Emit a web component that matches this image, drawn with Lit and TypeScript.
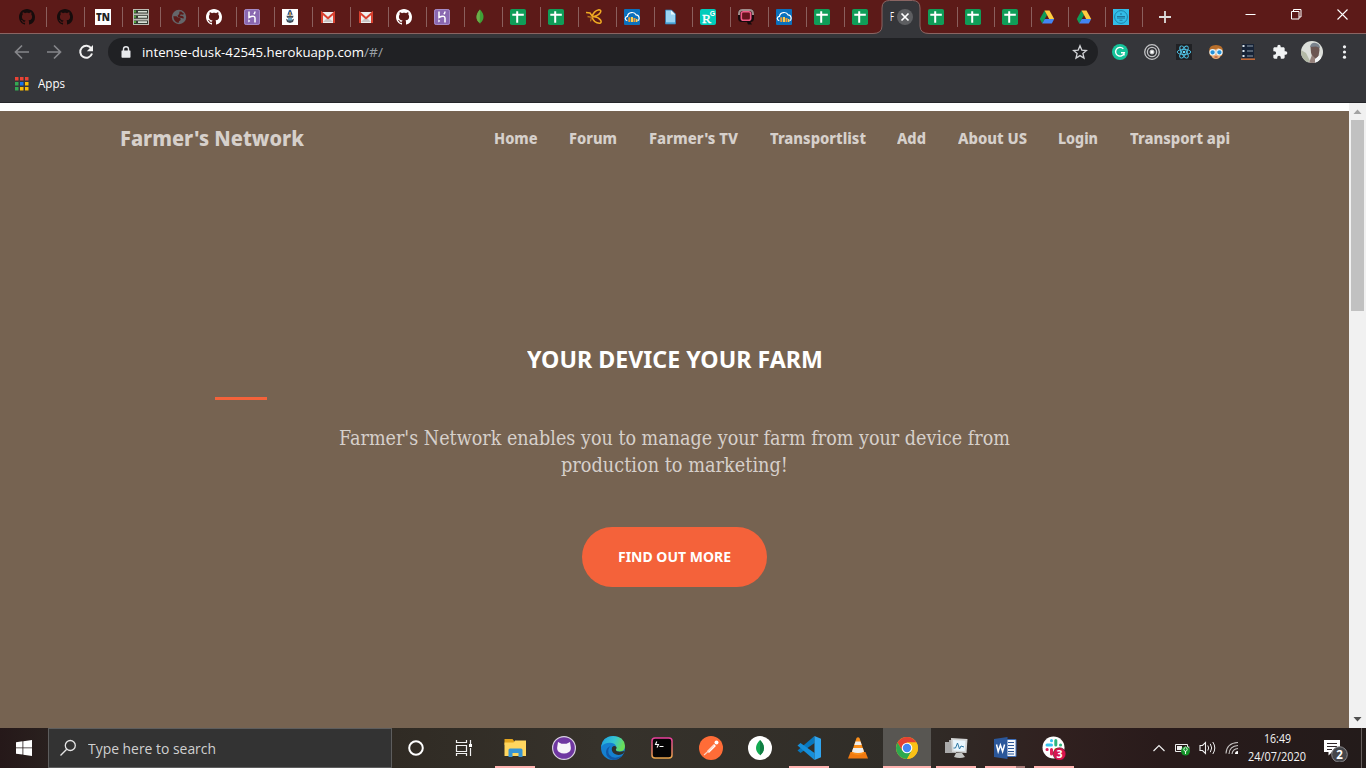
import { LitElement, html, svg, css } from "lit";
import { customElement, property } from "lit/decorators.js";

const githubShape = svg`<path fill-rule="evenodd" d="M8 0C3.58 0 0 3.58 0 8c0 3.54 2.29 6.53 5.47 7.59.4.07.55-.17.55-.38 0-.19-.01-.82-.01-1.49-2.01.37-2.53-.49-2.69-.94-.09-.23-.48-.94-.82-1.13-.28-.15-.68-.52-.01-.53.63-.01 1.08.58 1.23.82.72 1.21 1.87.87 2.33.66.07-.52.28-.87.51-1.07-1.78-.2-3.64-.89-3.64-3.95 0-.87.31-1.59.82-2.15-.08-.2-.36-1.02.08-2.12 0 0 .67-.21 2.2.82.64-.18 1.32-.27 2-.27s1.36.09 2 .27c1.53-1.04 2.2-.82 2.2-.82.44 1.1.16 1.92.08 2.12.51.56.82 1.27.82 2.15 0 3.07-1.87 3.75-3.65 3.95.29.25.54.73.54 1.48 0 1.07-.01 1.93-.01 2.2 0 .21.15.46.55.38A8.01 8.01 0 0 0 16 8c0-4.42-3.58-8-8-8z"/>`;

// 16-unit favicons
const fav: Record<string, unknown> = {
  githubDark: svg`<g fill="#160c0c">${githubShape}</g>`,
  github: svg`<g fill="#fff">${githubShape}</g>`,
  tn: svg`<rect width="16" height="16" fill="#fff"/><text x="8" y="12" text-anchor="middle" font-family="Open Sans, sans-serif" font-weight="800" font-size="10.5" textLength="14" lengthAdjust="spacingAndGlyphs" fill="#222">TN</text>`,
  server: svg`<path fill="#bcbcb4" d="M0 0h16v16H0z"/><path fill="#343b33" d="M1 1h14v3.600H1zM1 6.200h14v3.600H1zM1 11.400h14v3.600H1z"/><path fill="#d9e0d6" d="M5 1.900h9v1.600H5zM5 7.100h9v1.600H5zM5 12.300h9v1.600H5z"/><path fill="#53a83d" d="M1 1.500h2v2H1zM1 6.700h2v2H1zM1 11.900h2v2H1z"/>`,
  globe: svg`<circle cx="8" cy="8" r="7.200" fill="#65666a"/><path fill="#5c1a18" d="M2.300 7.200h3.200l2 1.800h1.800l.4 2-1.700 1.300-.5 1.700Q2.800 13 2.300 7.200zM8.500 2.600l1.700-.2 3 2.600-1.500.7-1.900-.4-.9 1.500 2.500.3 1.400 1-.4 1.600-1.500-.7-3.700-.6-.6-2 1.600-1.300z"/>`,
  heroku: svg`<rect width="16" height="16" rx="2.500" fill="#8a68b1"/><rect x=".5" y=".5" width="15" height="15" rx="2" fill="none" stroke="#a68bc5"/><path d="M5 2.500v6c3-1.500 6-1.700 6 .5v4.500M11 2.500c0 1.400-.5 2-1.200 2.700" fill="none" stroke="#fff" stroke-width="1.500"/><path fill="#fff" d="M4.300 10.300l2 1.600-2 1.700z"/>`,
  crest: svg`<rect width="16" height="16" fill="#fff"/><path fill="#2a5796" d="M7 1.500c.7-1 1.500-1 2 0l1.700 4.200H5.300z"/><path fill="#e5a035" d="M7.300 3h1.500v4H7.300z"/><path fill="#3f4b58" d="M4.500 6.700h7l-.5 2H5zM4 9.700c2.500 1.700 5.500 1.700 8 0l-1 3.300-3 1-3-1z"/><path fill="#69aac8" d="M6 9h4v2.500H6z"/>`,
  gmail: svg`<path fill="#eee" d="M1 3h14v11H1z"/><path fill="#c9c5c5" d="M3 13l5-5 5 5z"/><path fill="none" stroke="#d9402f" stroke-width="2" d="M2 14V4l6 5.200L14 4v10"/>`,
  mongo: svg`<path fill="#3fa037" d="M8 .5c2.500 2.500 3.700 5 3.500 7.500-.1 2.800-1.400 4.700-3.200 6L8 15.800 7.700 14C6 12.700 4.500 11 4.500 8S6 3 8 .5z"/><path fill="#6cad48" d="M8 .5C6 3 4.500 5 4.500 8s1.500 4.700 3.200 6z"/>`,
  sheet: svg`<rect width="16" height="16" rx="1.800" fill="#0f9d58"/><path d="M2.300 5.700h11.500M7.200 2.300v11.500" stroke="#fff" stroke-width="2"/>`,
  bee: svg`<g fill="none" stroke="#f0ac22" stroke-width="1.500"><path d="M0 3.500l4 .5 2.500 3.500M6 8Q7.500 2 13 .8q3 .4 1 3.200T6 8q5.500-1 8.500 3 1.500 2.500-.5 3.200-6 .3-8-6.200"/></g><path d="M1.500 7.500l4 .8-1 4" fill="none" stroke="#b97620" stroke-width="1.300"/>`,
  cloud: svg`<rect width="16" height="16" rx="1" fill="#0b70bd"/><path fill="#f29a2e" d="M4.300 8.300h2V13h-2zM9.500 9h2v4h-2z"/><path fill="#ffce4b" d="M7 8h2v5H7zM12 10h1.400v3H12z"/><path d="M3.300 11.800C.2 10.800 1 7.400 3.500 7.300c.5-4.500 7-5 8.500-1.500 3.500 0 4 5 1.600 6" fill="none" stroke="#fff" stroke-width="1.200"/>`,
  file: svg`<path fill="#9bd4f3" d="M3.500 1h6l4 4v10h-10z"/><path fill="#e5f7ff" d="M9 1v4.500h4.500z"/><path fill="#5db3e2" d="M3.500 13h10v2h-10z"/><path fill="none" stroke="#3079ad" stroke-width=".8" d="M3.500 1h6l4 4v10h-10z"/>`,
  rg: svg`<rect width="16" height="16" rx="2" fill="#00ccbb"/><text x="2" y="13.500" font-family="Liberation Serif, serif" font-size="13.500" fill="#fff" stroke="#fff" stroke-width=".4">R</text><text x="9.800" y="7.200" font-family="Liberation Sans, sans-serif" font-weight="700" font-size="7" fill="#fff">G</text>`,
  q: svg`<path d="M4 0h8q4 0 4 4v5q0 4-3.500 4L14 15.500H10L9 13H4q-4 0-4-4V4q0-4 4-4z" fill="#150a0c"/><path d="M1 6V5Q1 1 4.500 1h7q3.500 0 3.500 4v1" fill="none" stroke="#a08d8b" stroke-width="2"/><rect x="3.300" y="2.800" width="9.400" height="8.400" rx="2" fill="#67131d" stroke="#ef5b87" stroke-width="1.600"/>`,
  drive: svg`<path fill="#0f9d58" d="M5.500 1.500L.800 10l2.400 4.500L8 6z"/><path fill="#ffcd40" d="M5.500 1.500h5L15.200 10h-5z"/><path fill="#4285f4" d="M5.800 10h9.400l-2.400 4.500H3.200z"/>`,
  round: svg`<rect width="16" height="16" fill="#32bce7"/><circle cx="8" cy="8" r="6.400" fill="none" stroke="#197da4" stroke-width=".9"/><path d="M7 5h2M4 7.500h8M4 9h8M6.500 11.200h3" stroke="#1c6c8e" stroke-width=".9"/>`,
};

const leadingTabs = ["githubDark", "githubDark", "tn", "server", "globe"];
const middleTabs = ["github", "heroku", "crest", "gmail", "gmail", "github", "heroku", "mongo", "sheet", "sheet", "bee", "cloud", "file", "rg", "q", "cloud", "sheet", "sheet"];
const trailingTabs = ["sheet", "sheet", "sheet", "drive", "drive", "round"];

// Text stretched horizontally so that it fills a known advance width.
@customElement("fit-text")
export class FitText extends LitElement {
  @property({ type: Number }) width = 0;
  static styles = css`
    :host { display: inline-block; white-space: nowrap; text-align: left; }
    .glyphs { display: inline-block; transform-origin: 0 50%; }
  `;
  render() {
    return html`<span class="glyphs"><slot></slot></span>`;
  }
  firstUpdated() {
    const span = this.renderRoot.querySelector(".glyphs") as HTMLElement;
    const natural = span.getBoundingClientRect().width;
    this.style.width = `${this.width}px`;
    if (natural) span.style.transform = `scaleX(${this.width / natural})`;
  }
}

@customElement("browser-chrome")
export class BrowserChrome extends LitElement {
  static styles = css`
    :host { display: block; font-family: "Open Sans", "Noto Sans", sans-serif; color: #fff; }
    svg { display: block; flex: none; }
    .tabs { height: 34px; display: flex; background: #5c1a18; padding-left: 9px; box-sizing: border-box; box-shadow: inset 0 -1px #8a6563; }
    .tab { width: 38px; box-sizing: border-box; display: flex; padding: 9px 0 0 7px; background: linear-gradient(#8b5f5d, #8b5f5d) right 7px / 1px 20px no-repeat; }
    .tab.lead { padding-left: 10px; }
    .tab.plain { background: none; }
    .tab.tail { width: 37px; }
    .active { width: 38px; position: relative; }
    .active .shape { position: absolute; left: -10px; top: 0; }
    .active .label { position: absolute; left: 7px; top: 10px; font-size: 12px; line-height: 14px; }
    .active .close { position: absolute; left: 14px; top: 9px; }
    .plus { margin: 11px 0 0 16px; }
    .window { margin-left: auto; display: flex; gap: 35px; padding: 9px 18px 0 0; }
    .toolbar { height: 36px; background: #35363a; display: flex; align-items: center; padding-left: 14px; }
    .nav { display: flex; gap: 16px; width: 94px; }
    .omni { width: 990px; height: 28px; box-sizing: border-box; border-radius: 14px; background: #202124; display: flex; align-items: center; padding: 0 10px 0 12px; font-size: 13.500px; line-height: 18px; }
    .lock { margin-right: 10px; }
    .path { color: #9aa0a6; }
    .star { margin-left: auto; }
    .ext { display: flex; align-items: center; gap: 16px; margin-left: 14px; }
    .avatar { margin: 0 -3px; }
    .bookmarks { height: 33px; box-sizing: border-box; background: #35363a; border-bottom: 1px solid #25262a; display: flex; align-items: flex-start; padding: 7px 0 0 15px; font-size: 12.500px; line-height: 14px; gap: 9px; }
  `;
  private tab(name: string, extra = "") {
    return html`<div class="tab ${extra}"><svg width="16" height="16" viewBox="0 0 16 16">${fav[name]}</svg></div>`;
  }
  render() {
    const dots = ["#ea4335", "#ea4335", "#ea4335", "#34a853", "#1a73e8", "#fbbc05", "#34a853", "#fbbc05", "#fbbc05"];
    return html`
      <div class="tabs">
        ${leadingTabs.map((t) => this.tab(t, "lead"))}
        ${middleTabs.map((t, i) => this.tab(t, i === middleTabs.length - 1 ? "plain" : ""))}
        <div class="active">
          <svg class="shape" width="56" height="34" viewBox="0 0 56 34"><path d="M0 34v-.5q9 0 9-7.500V8q0-7.500 7.500-7.500h23q7.500 0 7.500 7.500v18q0 7.500 9 7.500v.5z" fill="#35363a"/><path d="M0 33.500q9 0 9-7.500V8q0-7.500 7.500-7.500h23q7.500 0 7.500 7.500v18q0 7.500 9 7.500" fill="none" stroke="#8a6563"/></svg>
          <fit-text class="label" width="4">F</fit-text>
          <svg class="close" width="16" height="16" viewBox="0 0 16 16"><circle cx="8" cy="8" r="8" fill="#5d5e61"/><path d="M4.500 4.500l7 7M11.500 4.500l-7 7" stroke="#fff" stroke-width="1.700"/></svg>
        </div>
        ${trailingTabs.map((t) => this.tab(t, "tail"))}
        <svg class="plus" width="12" height="12" viewBox="0 0 12 12"><path d="M6 0v12M0 6h12" stroke="#ddd" stroke-width="1.800"/></svg>
        <div class="window">
          <svg width="11" height="11" viewBox="0 0 11 11"><path d="M.5 5.500h10" stroke="#fff"/></svg>
          <svg width="11" height="11" viewBox="0 0 11 11"><path d="M.5 2.500h7.500v7.500h-7.500zM2.500 2.500v-2h7.500v7.500H8" fill="none" stroke="#fff"/></svg>
          <svg width="11" height="11" viewBox="0 0 11 11"><path d="M.5.500l10 10M10.500.500l-10 10" stroke="#fff" stroke-width="1.100"/></svg>
        </div>
      </div>
      <div class="toolbar">
        <div class="nav">
          <svg width="16" height="16" viewBox="0 0 16 16"><path d="M15 8H2M8 1.500L1.500 8 8 14.500" fill="none" stroke="#85868a" stroke-width="1.700"/></svg>
          <svg width="16" height="16" viewBox="0 0 16 16"><path d="M1 8h13M8 1.500L14.500 8 8 14.500" fill="none" stroke="#85868a" stroke-width="1.700"/></svg>
          <svg width="16" height="16" viewBox="0 0 16 16"><path d="M13.300 4.500A6 6 0 1 0 14 9.500" fill="none" stroke="#f1f1f1" stroke-width="2"/><path d="M15 1v6.200H8.800z" fill="#f1f1f1"/></svg>
        </div>
        <div class="omni">
          <svg class="lock" width="12" height="14" viewBox="0 0 12 14"><path d="M2 5.500h8q.5 0 .5.500v6q0 .7-.7.700H2.200q-.7 0-.7-.7V6q0-.5.5-.5z" fill="#e8eaed"/><path d="M3.500 6V4q0-2.300 2.500-2.300T8.500 4v2" fill="none" stroke="#e8eaed" stroke-width="1.400"/></svg>
          <fit-text width="222">intense-dusk-42545.herokuapp.com</fit-text><fit-text class="path" width="19">/#/</fit-text>
          <svg class="star" width="16" height="16" viewBox="0 0 16 16"><path d="M8 1.800l1.800 4.300 4.700.4-3.600 3 1.100 4.600L8 11.600l-4 2.500 1.100-4.600-3.600-3 4.700-.4z" fill="none" stroke="#d2d4d7" stroke-width="1.300"/></svg>
        </div>
        <div class="ext">
          <svg width="16" height="16" viewBox="0 0 16 16"><circle cx="8" cy="8" r="8" fill="#15c39a"/><path d="M11.300 4.800A4.400 4.400 0 1 0 12.300 8.800H9M12 8.500v3" fill="none" stroke="#fff" stroke-width="1.400"/></svg>
          <svg width="16" height="16" viewBox="0 0 16 16" fill="none" stroke="#c3c4c6"><circle cx="8" cy="8" r="7.300" stroke-width="1.300"/><circle cx="8" cy="8" r="4.600" stroke-width="1.300"/><circle cx="8" cy="8" r="2" fill="#fff"/></svg>
          <svg width="16" height="16" viewBox="0 0 16 16"><rect width="16" height="16" fill="#202124"/><g fill="none" stroke="#4fc4e8" stroke-width=".9"><ellipse cx="8" cy="8" rx="6.800" ry="2.600"/><ellipse cx="8" cy="8" rx="6.800" ry="2.600" transform="rotate(60 8 8)"/><ellipse cx="8" cy="8" rx="6.800" ry="2.600" transform="rotate(120 8 8)"/></g><circle cx="8" cy="8" r="1.300" fill="#61dafb"/></svg>
          <svg width="16" height="16" viewBox="0 0 16 16"><path fill="#b86e2a" d="M1 7q0-6 7-6t7 6l-1 5-12 0z"/><path fill="#edae78" d="M3 7l8-3 2 3v4q-1 4-5 4t-5-4z"/><g fill="#2491d9" stroke="#e6f5fc" stroke-width="1.100"><circle cx="4.600" cy="8.300" r="2.700"/><circle cx="11.400" cy="8.300" r="2.700"/></g><path d="M6.500 13h3" stroke="#963d2d"/></svg>
          <svg width="16" height="16" viewBox="0 0 16 16"><path fill="#182437" d="M2 0h12v14H2z"/><path d="M7 2h6M7 7h6M7 12h6" stroke="#8c9cab" stroke-width="1.200"/><path fill="#dbe5ed" d="M2.500 1h2v2h-2zM2.500 6h2v2h-2zM2.500 11h2v2h-2z"/><path d="M1 15.200h14" stroke="#c96b35" stroke-width="1.500"/></svg>
          <svg width="16" height="16" viewBox="0 0 24 24"><path fill="#f1f3f4" d="M20.500 11H19V7c0-1.100-.9-2-2-2h-4V3.500a2.500 2.500 0 0 0-5 0V5H4c-1.100 0-2 .9-2 2v3.800h1.500a2.700 2.700 0 0 1 0 5.400H2V20c0 1.100.9 2 2 2h3.800v-1.500a2.700 2.700 0 0 1 5.400 0V22H17c1.100 0 2-.9 2-2v-4h1.500a2.500 2.500 0 0 0 0-5z"/></svg>
          <svg class="avatar" width="22" height="22" viewBox="0 0 22 22"><defs><clipPath id="face"><circle cx="11" cy="11" r="11"/></clipPath></defs><g clip-path="url(#face)"><rect width="22" height="22" fill="#dcdfda"/><path d="M0 9l5 3 4 8-4 2-5-4z" fill="#b3b9a6"/><path d="M9.500 6q1-3 5-3t4 6l-1 6-2.500 3-3.500-2q-2-4-2-10z" fill="#6b5652"/><path d="M9 6q1-5 6-4 4 1 4 5l-4-1.500z" fill="#7a828c"/><path d="M8 22l3-8 3 3 0 5z" fill="#94807a"/><path d="M14 18l5-4 3 8h-8z" fill="#f2f4f5"/></g></svg>
          <svg width="16" height="16" viewBox="0 0 16 16" fill="#f1f3f4"><circle cx="8.500" cy="2.800" r="1.600"/><circle cx="8.500" cy="8" r="1.600"/><circle cx="8.500" cy="13.200" r="1.600"/></svg>
        </div>
      </div>
      <div class="bookmarks">
        <svg width="14" height="14" viewBox="0 0 14 14">${dots.map((c, i) => svg`<rect x=${(i % 3) * 5} y=${Math.floor(i / 3) * 5} width="3.500" height="3.500" fill=${c}/>`)}</svg>
        <fit-text width="27">Apps</fit-text>
      </div>
    `;
  }
}

@customElement("farm-page")
export class FarmPage extends LitElement {
  static styles = css`
    :host { display: flex; height: 625px; background: #fff; }
    .site { width: 1349px; height: 617px; margin-top: 8px; background: #766351; display: flex; flex-direction: column; }
    .bar { display: flex; justify-content: space-between; margin: 0 119px 0 120px; height: 54px; line-height: 54px; font-family: "Noto Sans", sans-serif; font-weight: 800; color: #d6d0cb; }
    .brand { font-size: 20.500px; }
    .links { display: flex; gap: 31.600px; font-size: 15px; }
    .hero { display: flex; flex-direction: column; align-items: center; padding-top: 176px; }
    h1 { margin: 0; font: 700 24px/36px "Noto Sans", sans-serif; color: #fff; height: 36px; }
    .rule { width: 52px; height: 3px; background: #f4623a; align-self: flex-start; margin: 20px 0 25px 215px; }
    p { margin: 0; font: 19.500px/27px "DejaVu Serif", serif; color: #d6d0cb; text-align: center; display: flex; flex-direction: column; align-items: center; }
    .cta { margin-top: 48px; width: 185px; height: 60px; box-sizing: border-box; border-radius: 30px; background: #f4623a; color: #fff; border: 0; padding: 0 0 3px 0; display: flex; align-items: center; justify-content: center; font: 700 14.500px/20px "Noto Sans", sans-serif; }
    .scroll { width: 17px; background: #f1f1f1; display: flex; flex-direction: column; align-items: center; }
    .thumb { width: 13px; height: 191px; background: #c1c1c1; }
    .down { margin-top: auto; }
    svg { display: block; }
  `;
  render() {
    const links: [string, number][] = [["Home", 43.5], ["Forum", 48], ["Farmer's TV", 89], ["Transportlist", 96], ["Add", 29], ["About US", 69], ["Login", 40], ["Transport api", 100]];
    return html`
      <main class="site">
        <nav class="bar">
          <fit-text class="brand" width="184">Farmer's Network</fit-text>
          <div class="links">${links.map(([t, w]) => html`<fit-text width=${w}>${t}</fit-text>`)}</div>
        </nav>
        <section class="hero">
          <h1><fit-text width="296">YOUR DEVICE YOUR FARM</fit-text></h1>
          <div class="rule"></div>
          <p>
            <fit-text width="671">Farmer's Network enables you to manage your farm from your device from</fit-text>
            <fit-text width="227">production to marketing!</fit-text>
          </p>
          <button class="cta"><fit-text width="113">FIND OUT MORE</fit-text></button>
        </section>
      </main>
      <div class="scroll">
        <svg width="17" height="17" viewBox="0 0 17 17"><path d="M4.500 11h8l-4-4.500z" fill="#a3a3a3"/></svg>
        <div class="thumb"></div>
        <svg class="down" width="17" height="17" viewBox="0 0 17 17"><path d="M4.500 6h8l-4 4.500z" fill="#505050"/></svg>
      </div>
    `;
  }
}

// 24-unit taskbar application icons
const apps: { icon: unknown; state?: string }[] = [
  { icon: svg`<circle cx="12" cy="12" r="6.800" fill="none" stroke="#fff" stroke-width="2"/>` },
  { icon: svg`<path d="M3.500 4v2.500h10V4M3.500 9.500h10v6H3.500zM3.500 20v-2.500h10V20M17.500 4v4M17.500 12v8" fill="none" stroke="#f1f1f1" stroke-width="1.200"/><path fill="#fff" d="M16 8h3v3h-3z"/>` },
  { icon: svg`<path fill="#e3a41d" d="M1.500 3h8l1.500 2v4h-9.500z"/><path fill="#ffd65f" d="M1.500 6.500h9l1.500-2h11V20h-21.500z"/><path fill="#3794d4" d="M5.500 14q0-1.500 1.500-1.500h11q1.500 0 1.500 1.500v7h-4v-4h-6v4h-4z"/>`, state: "open first" },
  { icon: svg`<circle cx="12" cy="12" r="11.400" fill="#6f37a1" stroke="#d8d1e0" stroke-width="1.200"/><path fill="#f7f4f8" d="M6 6l3.500 1.700h5L18 6l.6 4q1 4-1.600 6-5 3-10 0-2.600-2-1.600-6z"/>` },
  { icon: svg`<defs><linearGradient id="wave" x1="0" y1="0" x2="1" y2=".3"><stop stop-color="#1b9de2"/><stop offset=".6" stop-color="#37c6d0"/><stop offset="1" stop-color="#6ade58"/></linearGradient></defs><circle cx="12" cy="12" r="12" fill="#1580d0"/><path fill="url(#wave)" d="M0 11Q2 0 12 0q11 0 12 10 0 5-5 5.500-5 0-4-2.500 1-5-4-6Q4 6 0 11z"/><path fill="#1257a5" d="M9.500 10q-4 4-1 9 4 5 13 .5Q17 24 12 24 5 22 5 16q0-4 4.500-6z"/><path fill="#2f302b" d="M11 11.500q2-2.500 4.500-.5.500 1-.7 2.500.5 3.500 8.700 1.500-.8 2.500-2 3-5 2-8.500-.5-3-2.500-2-6z"/>` },
  { icon: svg`<defs><linearGradient id="rim" x1="0" y1="0" x2="0" y2="1"><stop stop-color="#e83e9c"/><stop offset="1" stop-color="#e9a64a"/></linearGradient></defs><rect x="2" y="2" width="20" height="20" rx="3" fill="#050505" stroke="url(#rim)" stroke-width="1.500"/><path d="M6.800 5.500L5.500 8.500h3l-1.500 3M9.500 10.500h4" fill="none" stroke="#fff" stroke-width="1.100"/>` },
  { icon: svg`<circle cx="12" cy="12" r="12" fill="#ff6c37"/><path d="M9 16l7-7" fill="none" stroke="#fff" stroke-width="2.600"/><path d="M5 19l5-4.500 5-5" fill="none" stroke="#ffd2c1" stroke-width="1.200"/><circle cx="17.500" cy="6.500" r="2" fill="#fff"/>` },
  { icon: svg`<circle cx="12" cy="12" r="12" fill="#fff"/><path fill="#13aa52" d="M12 4q4 4 4 8t-4 7q-4-3-4-7t4-8z"/><path fill="#107d43" d="M12 4q4 4 4 8t-4 7.500z"/>` },
  { icon: svg`<path fill="#0877bd" d="M17.500 0v7L3.500 17 .5 14.500z"/><path fill="#168fda" d="M.5 9.500l3-2.500 14 10v7z"/><path fill="#30a5ef" d="M17.500 0L24 2.800v18.400L17.500 24z"/>`, state: "open" },
  { icon: svg`<path fill="#f17a10" d="M4.500 16h15l2.500 6.500H2z"/><path fill="#fb8f1b" d="M10.500 2q1.500-1.500 3 0l5 15q-6.500 4-13 0z"/><path fill="#eee" d="M9.500 5.500h5l1.200 3.500H8.300zM7.200 12h9.600l1.200 3.700q-6 2.500-12 0z"/>` },
  { icon: svg`<circle cx="12" cy="12" r="11" fill="#fbc116"/><path fill="#e34133" d="M2.500 6.500a11 11 0 0 1 19 0H12l-4.800 8.200z"/><path fill="#2da94f" d="M2.500 6.500l4.800 8.200 9.500 0L12 23A11 11 0 0 1 2.500 6.500z"/><path fill="#fbc116" d="M12 6.500h9.500A11 11 0 0 1 12 23l4.800-8.500z"/><circle cx="12" cy="12" r="5.300" fill="#fff"/><circle cx="12" cy="12" r="4.200" fill="#4386f4"/>`, state: "current" },
  { icon: svg`<path fill="#aaa" d="M1 6h7v11H1zM5 4h7v13H5z"/><path fill="#d3d5d5" d="M7 2l16.500 1-1 14-14.500-1z"/><path fill="#eaf6fd" d="M9 4l12.500.8-.8 10.200-11.200-.6z"/><path d="M9.500 12h2l2-5 2 6 1.500-3 3 1" fill="none" stroke="#2e78a4"/><path fill="#c4c5c3" d="M12 17h6l3 4q-5 2-11 0z"/>`, state: "open" },
  { icon: svg`<path fill="#f4f7fb" stroke="#3e6db5" d="M12 3.500h11v17H12z"/><path d="M15 6.500h6M15 9.500h6M15 12.500h6M15 15.500h6M15 18h6" stroke="#2b579a"/><path fill="#2b579a" d="M1 3l13.500-2v22L1 21z"/><path d="M3.500 8.500l1.700 7 2.200-6.500 2.200 6.500 2-7" fill="none" stroke="#fff" stroke-width="1.500"/>`, state: "grouped" },
  { icon: svg`<circle cx="11.500" cy="11.500" r="11" fill="#fff"/><g stroke-width="3" stroke-linecap="round"><path d="M9.500 4.500v.2M5 9h4.500" stroke="#36c5f0"/><path d="M13.800 4.500v4.500M18.500 9h.1" stroke="#2eb67d"/><path d="M9.500 13.500v4.500M5 13.500h.2" stroke="#e01e5a"/><path d="M13.800 13.500h4" stroke="#ecb22e"/></g><circle cx="17.500" cy="18" r="6.300" fill="#d8134f" stroke="#4c1524" stroke-width=".6"/><text x="17.500" y="21.800" text-anchor="middle" font-family="Open Sans, sans-serif" font-weight="700" font-size="10.500" fill="#fff">3</text>`, state: "open" },
];

@customElement("task-bar")
export class TaskBar extends LitElement {
  static styles = css`
    :host { display: flex; height: 40px; background: linear-gradient(90deg, #251819 0, #29201e 48px, #302b24 392px, #36322b 600px, #302d28 900px, #30201f 1060px, #291b1b 1160px, #231b1a 100%); color: #f4f4f4; font-family: "Open Sans", sans-serif; }
    svg { display: block; flex: none; }
    .start { width: 48px; display: flex; align-items: center; justify-content: center; }
    .search { width: 344px; height: 40px; box-sizing: border-box; border: 1px solid #5d5d5d; background: #333; display: flex; align-items: center; padding-left: 10px; gap: 11px; font-size: 15px; color: #d0d0d0; }
    .apps { display: flex; gap: 1px; }
    .app { width: 48px; height: 40px; box-sizing: border-box; display: flex; align-items: center; justify-content: center; background: linear-gradient(#ffb3b0, #ffb3b0) 4px 100% / 0 2px no-repeat; }
    .first { margin-left: 1px; }
    .open { background-size: 40px 2px; }
    .grouped { background: linear-gradient(90deg, #ffb3b0 31px, #a87a78 31px) 4px 100% / 40px 2px no-repeat; }
    .current { background: linear-gradient(#ffb3b0, #ffb3b0) 0 100% / 100% 2px no-repeat #585652; }
    .tray { margin-left: auto; display: flex; align-items: center; gap: 8px; }
    .clock { display: flex; flex-direction: column; align-items: center; font-size: 12.500px; line-height: 18px; height: 40px; padding-top: 2px; box-sizing: border-box; margin-right: 9px; }
    .edge { width: 5px; height: 40px; box-sizing: border-box; border-left: 1px solid #665e5d; margin-left: 4px; }
  `;
  render() {
    return html`
      <div class="start"><svg width="16" height="16" viewBox="0 0 16 16"><path fill="#fff" d="M0 2.200L6.500 1.300v6.200H0zM7.300 1.200L16 0v7.500H7.300zM0 8.300h6.500v6.200L0 13.700zM7.300 8.300H16V16l-8.700-1.200z"/></svg></div>
      <div class="search">
        <svg width="18" height="18" viewBox="0 0 18 18"><circle cx="11.300" cy="6.500" r="5" fill="none" stroke="#e5e5e5" stroke-width="1.300"/><path d="M7.700 10.200L1.500 16.500" stroke="#e5e5e5" stroke-width="1.300"/></svg>
        <fit-text width="128">Type here to search</fit-text>
      </div>
      <div class="apps">${apps.map((a) => html`<div class="app ${a.state ?? ""}"><svg width="24" height="24" viewBox="0 0 24 24">${a.icon}</svg></div>`)}</div>
      <div class="tray">
        <svg width="14" height="16" viewBox="0 0 14 16"><path d="M1.500 11L7 5.500l5.500 5.500" fill="none" stroke="#eee" stroke-width="1.200"/></svg>
        <svg width="17" height="16" viewBox="0 0 17 16"><path d="M1.500 4.500h12v7h-12z" fill="none" stroke="#eee"/><path fill="#eee" d="M3 6h5v4H3zM14 6.500h1.300v3H14z"/><circle cx="11.500" cy="11" r="4.500" fill="#149329"/><path d="M11.500 14v-3M9.800 9.500q0-1.500 1.700-2.500 1.700 1 1.700 2.500 0 1.500-1.700 1.800-1.700-.3-1.700-1.800z" fill="none" stroke="#fff" stroke-width=".9"/></svg>
        <svg width="18" height="16" viewBox="0 0 18 16"><path d="M1 5.500H3.500L6.500 2.500v11L3.500 10.500H1z" fill="none" stroke="#eee" stroke-width="1.100"/><path d="M8.800 5.500q1.700 2.500 0 5M11.300 3.800q2.800 4.200 0 8.400M13.800 2q4 6 0 12" fill="none" stroke="#eee"/></svg>
        <svg width="15" height="16" viewBox="0 0 15 16"><g fill="none" stroke="#c8c4c3" stroke-width="1.100"><path d="M1 13.500Q1.500 3 13 2.500M4 14Q4.500 6 13 5.500M7 14Q7.500 9 13 8.500"/></g><path fill="#fff" d="M10 14q0-3 3-3v3z"/></svg>
        <div class="clock"><fit-text width="27">16:49</fit-text><fit-text width="58">24/07/2020</fit-text></div>
        <svg width="26" height="28" viewBox="0 0 26 28"><path fill="#fff" d="M1 6h16v12H9l-3.500 3.500V18H1z"/><path d="M4 9.500h10M4 12.500h10M4 15.500h5" stroke="#31272a"/><circle cx="16.500" cy="20.500" r="7.800" fill="#45464a" stroke="#8b898c"/><text x="16.500" y="24.800" text-anchor="middle" font-family="Open Sans, sans-serif" font-weight="700" font-size="11.500" fill="#fff">2</text></svg>
        <div class="edge"></div>
      </div>
    `;
  }
}

@customElement("app-root")
export class AppRoot extends LitElement {
  static styles = css`
    :host { display: block; width: 1366px; height: 768px; overflow: hidden; background: #766351; }
  `;
  render() {
    return html`<browser-chrome></browser-chrome><farm-page></farm-page><task-bar></task-bar>`;
  }
}
